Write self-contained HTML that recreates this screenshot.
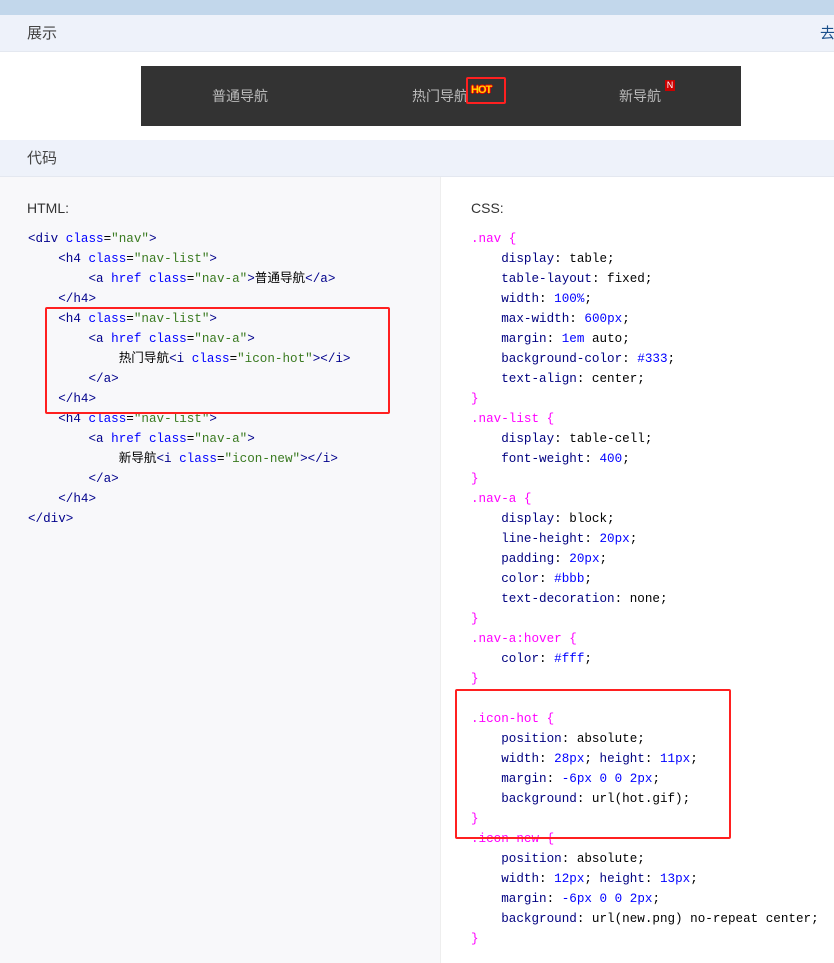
<!DOCTYPE html>
<html><head><meta charset="utf-8"><style>
*{margin:0;padding:0;box-sizing:border-box}
body{width:834px;height:963px;overflow:hidden;background:#fff;font-family:"Liberation Sans","Noto Sans CJK SC",sans-serif;position:relative}
.top{position:absolute;left:0;top:0;width:834px;height:15px;background:#c2d7eb}
.hd{position:absolute;left:0;width:834px;background:#eef2fa;border-bottom:1px solid #e4e8f0;font-size:15px;color:#444;padding-left:27px}
.nav{position:absolute;left:141px;top:66px;width:600px;height:60px;background:#333;color:#bbb;font-size:14px}
.nav span{position:absolute;top:20px;line-height:20px}
.left{position:absolute;left:0;top:177px;width:441px;height:786px;background:#f8f8fa;border-right:1px solid #eee}
.ttl{position:absolute;top:198px;font-size:14px;color:#333;line-height:20px}
pre{position:absolute;top:229px;font-family:"Liberation Mono","Noto Sans CJK SC",monospace;font-size:12.6px;line-height:20px;color:#000}
.t{color:#00008b}.a{color:#00f}.s{color:#3a7a20}
.k{color:#000080}.n{color:#00f}.sel{color:#f0f}
.box{position:absolute;border:2px solid #ff2020;border-radius:2px}
</style></head><body>
<div class="top"></div>
<div class="hd" style="top:15px;height:37px;line-height:38px">展示<span style="position:absolute;left:820px;color:#1a4f8a">去</span></div>
<div class="nav">
<span style="left:71px">普通导航</span>
<span style="left:271px">热门导航</span>
<span style="left:478px">新导航</span>
<div style="position:absolute;left:330px;top:18px;font:bold 11px 'Liberation Sans',sans-serif;color:#ffd800;text-shadow:1px 0 0 #e00,-1px 0 0 #e00,0 1px 0 #e00,0 -1px 0 #e00;letter-spacing:-1px">HOT</div>
<div style="position:absolute;left:524px;top:14px;width:10px;height:11px;background:#c00;color:#fff;font:9px 'Liberation Sans',sans-serif;text-align:center;line-height:11px">N</div>
</div>
<div class="box" style="left:466px;top:77px;width:40px;height:27px"></div>
<div class="hd" style="top:140px;height:37px;line-height:38px">代码</div>
<div class="left"></div>
<div class="ttl" style="left:27px">HTML:</div>
<div class="ttl" style="left:471px">CSS:</div>
<pre style="left:28px"><span class="t">&lt;div</span> <span class="a">class</span>=<span class="s">"nav"</span><span class="t">&gt;</span>
    <span class="t">&lt;h4</span> <span class="a">class</span>=<span class="s">"nav-list"</span><span class="t">&gt;</span>
        <span class="t">&lt;a</span> <span class="a">href class</span>=<span class="s">"nav-a"</span><span class="t">&gt;</span>普通导航<span class="t">&lt;/a&gt;</span>
    <span class="t">&lt;/h4&gt;</span>
    <span class="t">&lt;h4</span> <span class="a">class</span>=<span class="s">"nav-list"</span><span class="t">&gt;</span>
        <span class="t">&lt;a</span> <span class="a">href class</span>=<span class="s">"nav-a"</span><span class="t">&gt;</span>
            热门导航<span class="t">&lt;i</span> <span class="a">class</span>=<span class="s">"icon-hot"</span><span class="t">&gt;&lt;/i&gt;</span>
        <span class="t">&lt;/a&gt;</span>
    <span class="t">&lt;/h4&gt;</span>
    <span class="t">&lt;h4</span> <span class="a">class</span>=<span class="s">"nav-list"</span><span class="t">&gt;</span>
        <span class="t">&lt;a</span> <span class="a">href class</span>=<span class="s">"nav-a"</span><span class="t">&gt;</span>
            新导航<span class="t">&lt;i</span> <span class="a">class</span>=<span class="s">"icon-new"</span><span class="t">&gt;&lt;/i&gt;</span>
        <span class="t">&lt;/a&gt;</span>
    <span class="t">&lt;/h4&gt;</span>
<span class="t">&lt;/div&gt;</span></pre>
<pre style="left:471px"><span class="sel">.nav {</span>
    <span class="k">display</span>: table;
    <span class="k">table-layout</span>: fixed;
    <span class="k">width</span>: <span class="n">100%</span>;
    <span class="k">max-width</span>: <span class="n">600px</span>;
    <span class="k">margin</span>: <span class="n">1em</span> auto;
    <span class="k">background-color</span>: <span class="n">#333</span>;
    <span class="k">text-align</span>: center;
<span class="sel">}</span>
<span class="sel">.nav-list {</span>
    <span class="k">display</span>: table-cell;
    <span class="k">font-weight</span>: <span class="n">400</span>;
<span class="sel">}</span>
<span class="sel">.nav-a {</span>
    <span class="k">display</span>: block;
    <span class="k">line-height</span>: <span class="n">20px</span>;
    <span class="k">padding</span>: <span class="n">20px</span>;
    <span class="k">color</span>: <span class="n">#bbb</span>;
    <span class="k">text-decoration</span>: none;
<span class="sel">}</span>
<span class="sel">.nav-a:hover {</span>
    <span class="k">color</span>: <span class="n">#fff</span>;
<span class="sel">}</span>

<span class="sel">.icon-hot {</span>
    <span class="k">position</span>: absolute;
    <span class="k">width</span>: <span class="n">28px</span>; <span class="k">height</span>: <span class="n">11px</span>;
    <span class="k">margin</span>: <span class="n">-6px</span> <span class="n">0</span> <span class="n">0</span> <span class="n">2px</span>;
    <span class="k">background</span>: url(hot.gif);
<span class="sel">}</span>
<span class="sel">.icon-new {</span>
    <span class="k">position</span>: absolute;
    <span class="k">width</span>: <span class="n">12px</span>; <span class="k">height</span>: <span class="n">13px</span>;
    <span class="k">margin</span>: <span class="n">-6px</span> <span class="n">0</span> <span class="n">0</span> <span class="n">2px</span>;
    <span class="k">background</span>: url(new.png) no-repeat center;
<span class="sel">}</span></pre>
<div class="box" style="left:45px;top:307px;width:345px;height:107px"></div>
<div class="box" style="left:455px;top:689px;width:276px;height:150px"></div>
</body></html>
